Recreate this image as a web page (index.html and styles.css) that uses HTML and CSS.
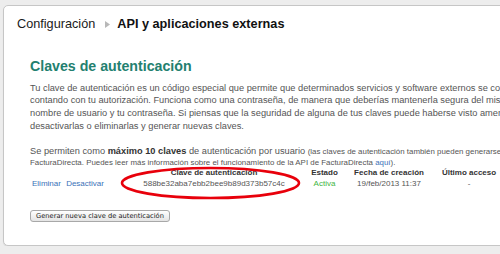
FILE: index.html
```
<!DOCTYPE html>
<html lang="es">

<head>
    <meta charset="UTF-8">
    <meta name="viewport" content="width=device-width, initial-scale=1.0">
    <title>API y aplicaciones externas</title>
    <link rel="stylesheet" href="styles.css">
</head>

<body>
    <div class="panel">
        <h1 class="breadcrumb">
            <span>Configuración</span>
            <svg class="sep" width="5" height="7" viewBox="0 0 5 7"><path d="M0 0 L5 3.5 L0 7 Z" fill="#b8b8b8"/></svg>
            <strong>API y aplicaciones externas</strong>
        </h1>

        <div class="content">
            <h2>Claves de autenticación</h2>

            <p class="intro">
                Tu clave de autenticación es un código especial que permite que determinados servicios y software externos se conecten a tu cuenta de FacturaDirecta<br>
                contando con tu autorización. Funciona como una contraseña, de manera que deberías mantenerla segura del mismo modo que tu<br>
                nombre de usuario y tu contraseña. Si piensas que la seguridad de alguna de tus claves puede haberse visto amenazada, puedes<br>
                desactivarlas o eliminarlas y generar nuevas claves.
            </p>

            <div class="limits">
                <div class="limits-main">Se permiten como <b>máximo 10 claves</b> de autenticación por usuario <span class="note">(las claves de autenticación también pueden generarse desde la aplicación de escritorio de</span></div>
                <div class="note">FacturaDirecta. Puedes leer más información sobre el funcionamiento de la API de FacturaDirecta <a href="#">aquí</a>).</div>
            </div>

            <!-- Tabla de claves -->
            <div class="keys-wrap">
                <table class="keys">
                    <colgroup>
                        <col class="c-actions">
                        <col class="c-key">
                        <col class="c-state">
                        <col class="c-date">
                        <col class="c-last">
                    </colgroup>
                    <thead>
                        <tr>
                            <th></th>
                            <th>Clave de autenticación</th>
                            <th>Estado</th>
                            <th>Fecha de creación</th>
                            <th>Último acceso</th>
                        </tr>
                    </thead>
                    <tbody>
                        <tr>
                            <td class="actions"><a href="#">Eliminar</a> <a href="#">Desactivar</a></td>
                            <td class="key">588be32aba7ebb2bee9b89d373b57c4c</td>
                            <td class="active">Activa</td>
                            <td>19/feb/2013 11:37</td>
                            <td>-</td>
                        </tr>
                    </tbody>
                </table>
                <svg class="mark" width="184" height="36" viewBox="0 0 184 36">
                    <ellipse cx="90.5" cy="17" rx="88.5" ry="15" fill="none" stroke="#e8000b" stroke-width="2.6"/>
                </svg>
            </div>

            <button class="btn">Generar nueva clave de autenticación</button>
        </div>
    </div>
</body>

</html>
```

FILE: styles.css
```
body {
    margin: 0;
    background-color: #ededed;
    font-family: "Liberation Sans", Arial, sans-serif;
    overflow: hidden;
}

.panel {
    margin: 5px 0 0 3px;
    width: 820px;
    background-color: white;
    border: 1px solid #c6c6c6;
    border-radius: 5px;
    box-shadow: 0 1px 1px rgba(0, 0, 0, 0.08);
    padding: 9px 0 23px;
}

.breadcrumb {
    margin: 0;
    padding-left: 13px;
    display: flex;
    align-items: center;
    font-size: 12.7px;
    line-height: 18px;
    font-weight: normal;
    color: #1a1a1a;
    white-space: nowrap;
}

.breadcrumb .sep {
    margin: 0 7px 0 10px;
}

.breadcrumb strong {
    color: #111;
}

.content {
    padding-left: 26px;
    white-space: nowrap;
}

.content h2 {
    margin: 24px 0 0;
    font-size: 14.2px;
    line-height: 18px;
    color: #23806f;
}

.intro {
    margin: 6.6px 0 0;
    font-size: 9.25px;
    line-height: 12.7px;
    color: #555;
}

.limits {
    margin-top: 12.6px;
    color: #555;
}

.limits-main {
    font-size: 9.25px;
    line-height: 12px;
    height: 12px;
}

.limits-main b {
    color: #333;
}

.note {
    font-size: 7.9px;
    line-height: 11px;
}

.limits-main .note {
    line-height: 12px;
}

.note a {
    color: #3b72b8;
    text-decoration: none;
}

.keys-wrap {
    position: relative;
}

.keys {
    border-collapse: collapse;
    table-layout: fixed;
    width: 471px;
}

.c-actions { width: 90px; }
.c-key { width: 188px; }
.c-state { width: 33px; }
.c-date { width: 96px; }
.c-last { width: 64px; }

.keys th,
.keys td {
    padding: 0;
    height: 12px;
    line-height: 12px;
    font-size: 8px;
    text-align: center;
    color: #555;
}

.keys th {
    height: 10px;
    line-height: 10px;
    font-weight: bold;
    color: #333;
}

.keys td.actions {
    text-align: left;
    padding-left: 2px;
}

.actions a {
    color: #3b72b8;
    text-decoration: none;
    margin-right: 3px;
}

.keys td.active {
    color: #3fb53f;
}

.mark {
    position: absolute;
    left: 90px;
    top: -2px;
}

.btn {
    display: block;
    margin-top: 20px;
    height: 12px;
    padding: 0 5px;
    font-family: "DejaVu Sans", sans-serif;
    font-size: 6.7px;
    line-height: 10px;
    color: #222;
    background: linear-gradient(#ffffff, #e4e4e4);
    border: 1px solid #a8a8a8;
    border-radius: 3px;
}
```
